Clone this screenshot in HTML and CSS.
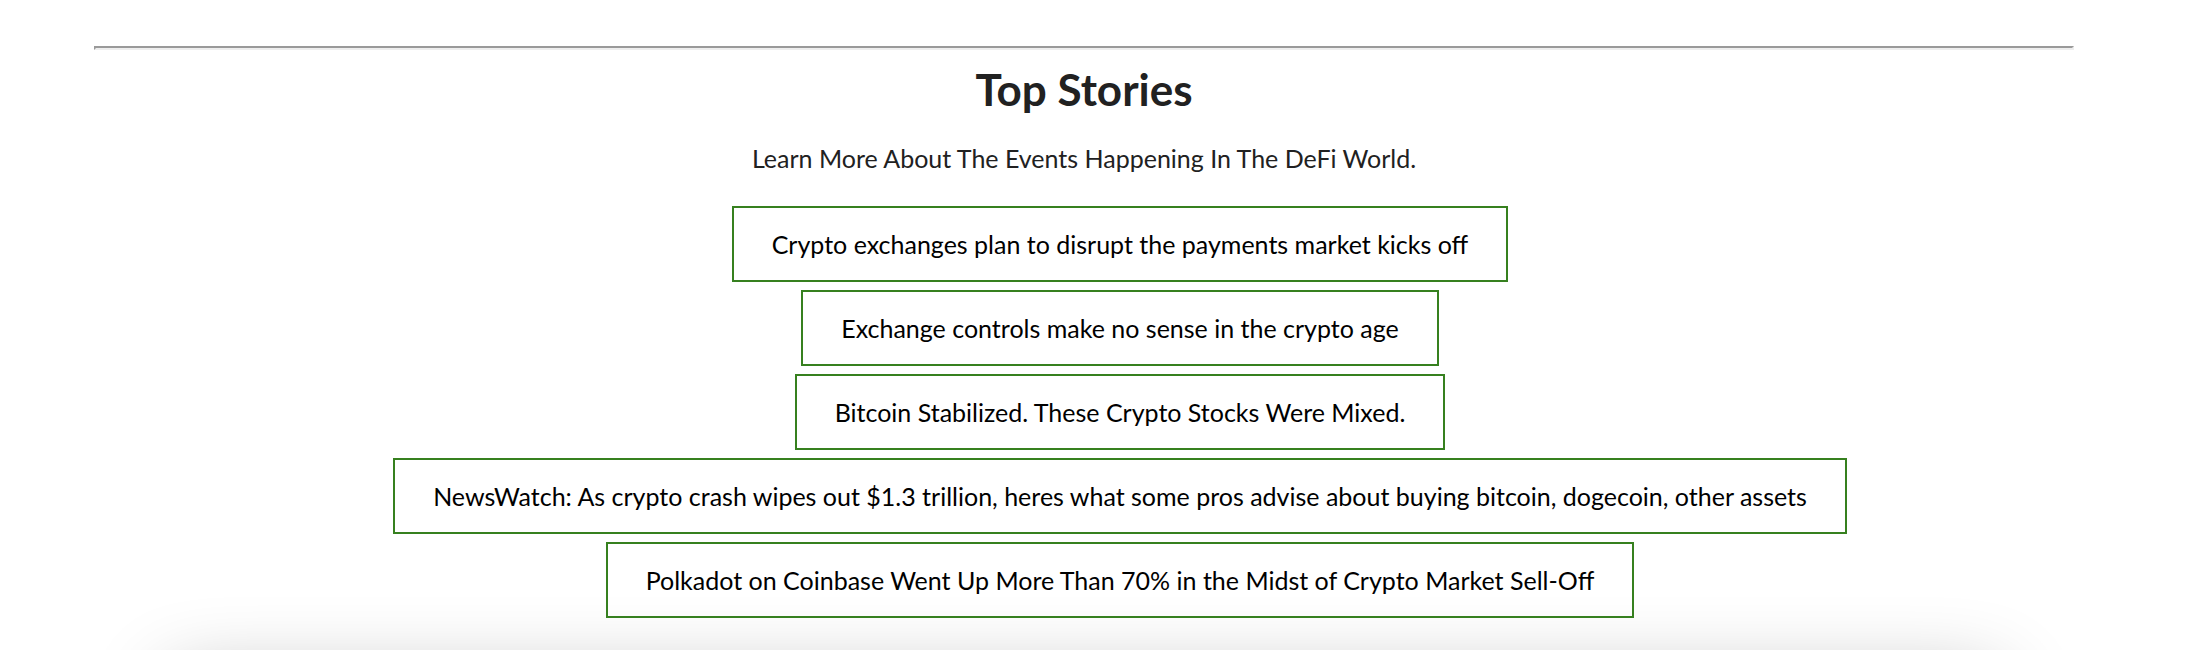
FILE: index.html
```html
<!DOCTYPE html>
<html lang="en">
<head>
<meta charset="utf-8">
<title>Top Stories</title>
<link rel="stylesheet" href="styles.css">
</head>
<body>
<main class="page">
<hr class="rule">
<section class="stories">
<h2 class="title">Top Stories</h2>
<p class="subtitle">Learn More About The Events Happening In The DeFi World.</p>
<ul class="list">
<li><a class="story" href="#">Crypto exchanges plan to disrupt the payments market kicks off</a></li>
<li><a class="story" href="#">Exchange controls make no sense in the crypto age</a></li>
<li><a class="story" href="#">Bitcoin Stabilized. These Crypto Stocks Were Mixed.</a></li>
<li><a class="story" href="#">NewsWatch: As crypto crash wipes out $1.3 trillion, heres what some pros advise about buying bitcoin, dogecoin, other assets</a></li>
<li><a class="story" href="#">Polkadot on Coinbase Went Up More Than 70% in the Midst of Crypto Market Sell-Off</a></li>
</ul>
</section>
</main>
<footer class="footer"></footer>
</body>
</html>
```
FILE: styles.css
```css
* { box-sizing: border-box; }
html { overflow-x: hidden; scrollbar-width: none; }
body { margin: 0; background: #fff; color: #212121; font: 25px/36px Lato, sans-serif; }
.page { padding: 46px 120px 0 94px; }
.rule { margin: 0; border: 2px solid; border-color: #9a9a9a #eee #eee #9a9a9a; }
.stories { text-align: center; }
.title { margin: 14px 0 0; font-size: 44px; line-height: 50px; font-weight: 700; }
.subtitle { margin: 26px 0 0; }
.list { margin: 30px 0 0; padding: 0 0 0 72px; list-style: none; display: flex; flex-direction: column; align-items: center; gap: 8px; }
.story { display: block; padding: 18px 38px; border: 2px solid #36801f; color: #000; text-decoration: none; }
/* The footer card sits just under the fold; its soft shadow spreads up over the page end. */
.footer { height: 120px; margin: 62px 196px 0 170px; box-shadow: 0 0 80px rgba(0,0,0,.3); }
```
